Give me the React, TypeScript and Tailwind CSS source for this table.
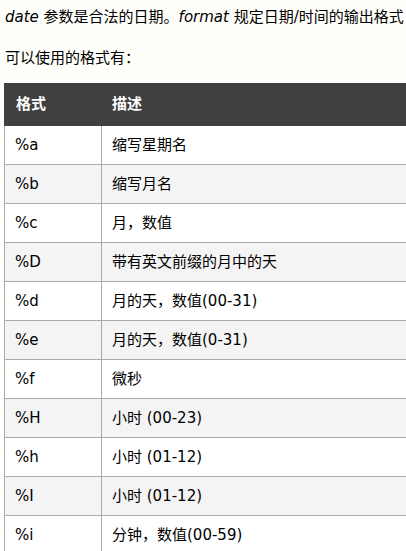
import React from "react";

const rows: [string, string][] = [
  ["%a", "缩写星期名"],
  ["%b", "缩写月名"],
  ["%c", "月，数值"],
  ["%D", "带有英文前缀的月中的天"],
  ["%d", "月的天，数值(00-31)"],
  ["%e", "月的天，数值(0-31)"],
  ["%f", "微秒"],
  ["%H", "小时 (00-23)"],
  ["%h", "小时 (01-12)"],
  ["%I", "小时 (01-12)"],
  ["%i", "分钟，数值(00-59)"],
];

export default function App() {
  return (
    <div
      className="w-[406px] h-[551px] overflow-hidden bg-[#fefefa] text-black text-[15px]"
      style={{ fontFamily: '"DejaVu Sans", "Noto Sans CJK SC", sans-serif' }}
    >
      <p className="pl-[5px] pt-[7px] h-[27px] leading-[20px] whitespace-nowrap">
        <i>date</i> 参数是合法的日期。<i>format</i> 规定日期/时间的输出格式
      </p>
      <p className="pl-[5px] mt-[21px] h-[20px] leading-[20px] whitespace-nowrap">可以使用的格式有：</p>
      <div className="pl-[4px] mt-[15px]">
        <table className="border-collapse w-[600px]">
          <thead>
            <tr className="bg-[#404040] text-white h-[42px]">
              <th className="w-[97px] text-left font-bold pl-[11px] border border-[#404040]">格式</th>
              <th className="text-left font-bold pl-[10px] border border-[#404040]">描述</th>
            </tr>
          </thead>
          <tbody>
            {rows.map(([a, b], i) => (
              <tr key={a} className={`h-[39px] ${i % 2 === 1 ? "bg-[#f4f4f4]" : "bg-white"}`}>
                <td className="w-[97px] border border-[#aaaaaa] pl-[10px]">{a}</td>
                <td className="border border-[#aaaaaa] pl-[10px]">{b}</td>
              </tr>
            ))}
          </tbody>
        </table>
      </div>
    </div>
  );
}
